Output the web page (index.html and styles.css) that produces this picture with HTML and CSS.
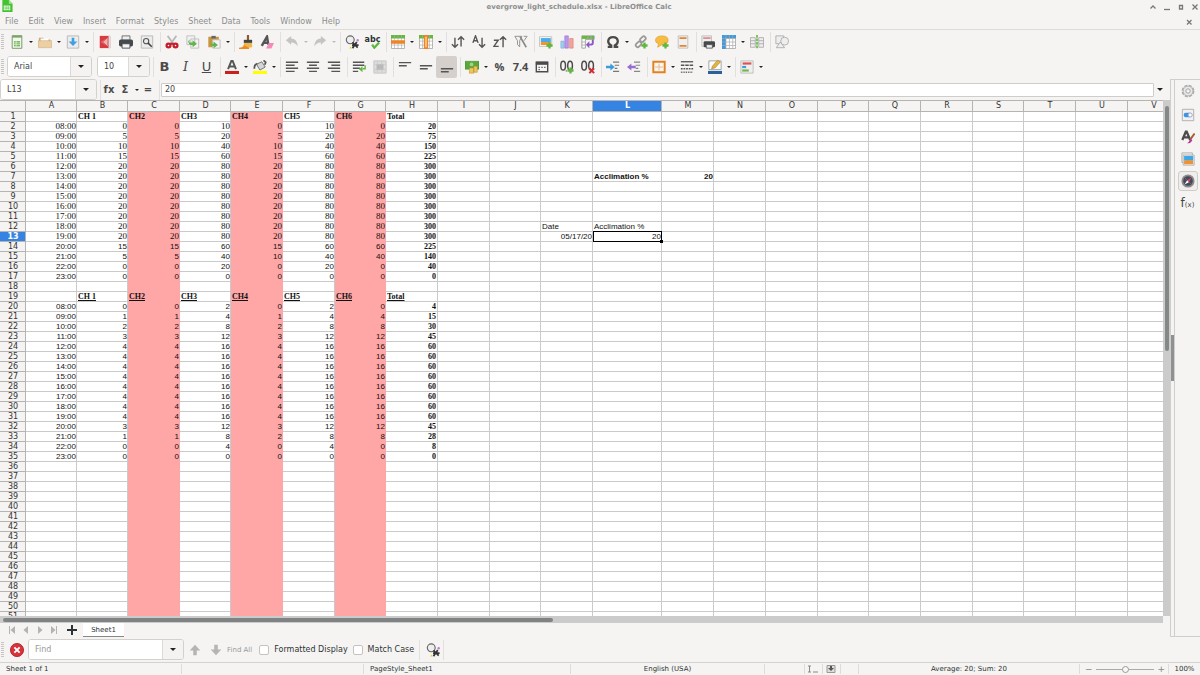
FILE: index.html
```html
<!DOCTYPE html>
<html lang="en">
<head>
<meta charset="utf-8">
<title>evergrow_light_schedule.xlsx - LibreOffice Calc</title>
<link rel="stylesheet" href="styles.css">
</head>
<body>
<header class="titlebar">
  <svg class="app-icon" viewBox="0 0 12 14"><path d="M1 0h7l4 4v9H1z" fill="#43c330"/><path d="M8 0l4 4H8z" fill="#9be58a"/><path d="M2.500 6h7v5h-7z" fill="#fff"/><path d="M2.500 7.700h7M2.500 9.400h7M5 6v5M7.300 6v5" stroke="#43c330" stroke-width=".6"/></svg>
  <h1 class="title">evergrow_light_schedule.xlsx - LibreOffice Calc</h1>
  <div class="window-controls">
    <button aria-label="Roll up"><svg viewBox="0 0 8 8"><path d="M1.500 5.500L4 3l2.500 2.500"/></svg></button>
    <button aria-label="Minimize"><svg viewBox="0 0 8 8"><path d="M1 6.500h6"/></svg></button>
    <button aria-label="Maximize"><svg viewBox="0 0 8 8"><path d="M2.500 2.500h3v3.500h-3z"/></svg></button>
    <button aria-label="Close"><svg viewBox="0 0 8 8"><path d="M1.500 1.500l5 5M6.500 1.500l-5 5"/></svg></button>
  </div>
</header>
<nav class="menubar">
  <button>File</button><button>Edit</button><button>View</button><button>Insert</button><button>Format</button><button>Styles</button><button>Sheet</button><button>Data</button><button>Tools</button><button>Window</button><button>Help</button>
  <button class="doc-close" aria-label="Close document"><svg viewBox="0 0 8 8"><path d="M2 2l4.500 4.500M6.500 2L2 6.500"/></svg></button>
</nav>

<div class="toolbar" role="toolbar" aria-label="Standard">
  <span class="grip"></span>
  <button class="tool" aria-label="New"><svg viewBox="0 0 16 16"><path d="M2.500.8h11v14.400h-11z" fill="#f3f8ee" stroke="#6b8f5a"/><path d="M4.500 7h7v6h-7z" fill="#6fb356"/><path d="M4.500 9h7M4.500 11h7M7 7v6" stroke="#fff" stroke-width=".7"/><path d="M2.500 1h11v2h-11z" fill="#7aa766"/></svg></button><button class="arrow" aria-label="New options"></button>
  <button class="tool" aria-label="Open"><svg viewBox="0 0 16 16"><path d="M1 13.500V3h5l1 2h7v8.500z" fill="#c9a97c"/><path d="M3 4h9v4H3z" fill="#fff"/><path d="M.5 6.500h15v8H.5z" fill="#ecd0a4" stroke="#caa676" stroke-width=".6"/></svg></button><button class="arrow" aria-label="Open options"></button>
  <button class="tool" aria-label="Save"><svg viewBox="0 0 16 16"><path d="M1.500 1h13v14h-13z" fill="#ececec" stroke="#b5b5b5"/><path d="M6.500 3h3v4.500H13L8 12.500 3 7.500h3.500z" fill="#3ea0e2"/></svg></button><button class="arrow" aria-label="Save options"></button>
  <i class="sep"></i>
  <button class="tool" aria-label="Export as PDF"><svg viewBox="0 0 16 16"><path d="M2 1h12v14H2z" fill="#d93a3f"/><path d="M12 1h2.500v14H12z" fill="#ddd"/><path d="M11 2.500v11L3.500 8z" fill="#f5b0ae"/><path d="M11 2.500L5 8l6 5.500" fill="none" stroke="#b3262c"/></svg></button>
  <button class="tool" aria-label="Print"><svg viewBox="0 0 16 16"><path d="M3.500 1h9v5h-9z" fill="#eee" stroke="#666"/><rect y="5" width="16" height="8" rx="2" fill="#444a4d"/><path d="M3.500 10h9v5h-9z" fill="#f5f5f5" stroke="#444"/></svg></button>
  <button class="tool" aria-label="Print preview"><svg viewBox="0 0 16 16"><path d="M1.500 1h13v14h-13z" fill="#ececec" stroke="#b5b5b5"/><circle cx="7" cy="7" r="3" fill="none" stroke="#555" stroke-width="1.300"/><path d="M9 9l4.500 4.500" stroke="#444" stroke-width="1.800"/></svg></button>
  <i class="sep"></i>
  <button class="tool" aria-label="Cut"><svg viewBox="0 0 16 16"><path d="M3 1l6.500 9M13 1L6.500 10" stroke="#b9b9b9" stroke-width="2"/><circle cx="4" cy="12" r="2.200" fill="#fff" stroke="#c41f2a" stroke-width="2.600"/><circle cx="12" cy="12" r="2.200" fill="#fff" stroke="#c41f2a" stroke-width="2.600"/><path d="M6 10h4" stroke="#c41f2a" stroke-width="2.400"/></svg></button>
  <button class="tool" aria-label="Copy"><svg viewBox="0 0 16 16"><path d="M1 1h9v10H1zM5.500 4.500h9v10.500h-9z" fill="#f2f2f2" stroke="#bbb"/><path d="M4 5v3.500h3.500V6l5 4-5 4v-2.500H6Q3 11 2.500 7z" fill="#61b34c"/></svg></button>
  <button class="tool" aria-label="Paste"><svg viewBox="0 0 16 16"><path d="M1.500 2h12v12h-12z" fill="#c9963e"/><path d="M5 1h5v3H5z" fill="#666"/><path d="M6.500 5.500H15V15H6.500z" fill="#f4f4f4" stroke="#bbb"/><path d="M4 7v3h3.500V7.500l5 4-5 3.500v-2.500Q3.500 12.500 3 8z" fill="#61b34c"/></svg></button><button class="arrow" aria-label="Paste options"></button>
  <i class="sep"></i>
  <button class="tool" aria-label="Clone formatting"><svg viewBox="0 0 16 16"><path d="M9 0h2.500v6H9z" fill="#8b5a2b"/><path d="M5.500 5.500H15V9H5.500z" fill="#444"/><path d="M5.500 9H15v5q-4 1-9.500 0z" fill="#f0b64c"/><path d="M0 14.500q5 0 5.500-3l6 3V16H0z" fill="#ef8a1d"/></svg></button>
  <button class="tool" aria-label="Clear formatting"><svg viewBox="0 0 16 16"><path d="M2 12.500L8 2l1.500 9M4 9h6" fill="none" stroke="#555" stroke-width="2.800"/><path d="M10 9h6l-3 6.500H7z" fill="#f58ab8"/></svg></button>
  <i class="sep"></i>
  <button class="tool" aria-label="Undo"><svg viewBox="0 0 16 16"><path d="M1 6l6-5v3q7 0 7.500 9Q12 8.500 7 8.500V11z" fill="#c4c4c4"/></svg></button><button class="arrow faded" aria-label="Undo list"></button>
  <button class="tool" aria-label="Redo"><svg viewBox="0 0 16 16"><path d="M15 6L9 1v3Q2 4 1.500 13 4 8.500 9 8.500V11z" fill="#c4c4c4"/></svg></button><button class="arrow faded" aria-label="Redo list"></button>
  <i class="sep"></i>
  <button class="tool" aria-label="Find and replace"><svg viewBox="0 0 16 16"><circle cx="6" cy="5.500" r="4.500" fill="#eee" stroke="#666" stroke-width="1.300"/><path d="M8.500 8.500l6 6M13.500 8l-5 7M8 11.500h7.500" stroke="#333" stroke-width="2"/><circle cx="14.500" cy="6" r="1.400" fill="#c47ad8"/><path d="M6 13l2 2.500H5z" fill="#edd400"/></svg></button>
  <button class="tool abc" aria-label="Spelling"><span>abc</span><svg viewBox="0 0 16 16"><path d="M7 11l2.500 3.500L15 8.500" fill="none" stroke="#5cb83c" stroke-width="2.600"/></svg></button>
  <i class="sep"></i>
  <button class="tool" aria-label="Row"><svg viewBox="0 0 16 16"><path d="M.5.5h15v15H.5z" fill="#fff" stroke="#aaa"/><path d="M0 0h16v4H0z" fill="#68b83e"/><path d="M0 11.500h16M4 0v16M8 0v16M12 0v16" stroke="#aaa" stroke-width=".7"/><path d="M0 6h16v4H0z" fill="#ee8425"/></svg></button><button class="arrow" aria-label="Row options"></button>
  <button class="tool" aria-label="Column"><svg viewBox="0 0 16 16"><path d="M.5.5h15v15H.5z" fill="#fff" stroke="#aaa"/><path d="M0 0h16v4H0z" fill="#68b83e"/><path d="M0 7h16M0 11.500h16M4 0v16M12 0v16" stroke="#aaa" stroke-width=".7"/><path d="M5.500 0h5v16h-5z" fill="#ee8425"/><path d="M7 2h2v12H7z" fill="#ffc88a"/></svg></button><button class="arrow" aria-label="Column options"></button>
  <i class="sep"></i>
  <button class="tool line" aria-label="Sort"><svg viewBox="0 0 16 16"><path d="M4.500 3v11M1 10.500L4.500 14 8 10.500M11.500 13V2M8 5.500L11.500 2 15 5.500"/></svg></button>
  <button class="tool line" aria-label="Sort ascending"><svg viewBox="0 0 16 16"><path d="M1 9l3-8 3 8M2.200 6.500h3.600M11.500 3v11M8 10.500l3.500 3.500 3.500-3.500"/></svg></button>
  <button class="tool line" aria-label="Sort descending"><svg viewBox="0 0 16 16"><path d="M1 6h5L1 13h5.500M11.500 14V2M8 5.500L11.500 2 15 5.500"/></svg></button>
  <button class="tool" aria-label="AutoFilter"><svg viewBox="0 0 16 16"><path d="M1 1.500h8l-2.500 5v7L4 11V6.500zM11 1.500h4l-3.500 5" fill="#f4f4f4" stroke="#888"/><path d="M7 2l7 12" stroke="#888" stroke-width="1.800"/></svg></button>
  <i class="sep"></i>
  <button class="tool" aria-label="Insert image"><svg viewBox="0 0 16 16"><path d="M.5 2h14v11H.5z" fill="#fff" stroke="#bbb"/><path d="M2 3.500h11.500V8H2z" fill="#49aee8"/><path d="M2 8h11.500v3.500H2z" fill="#ef9632"/><path d="M12 8.500v7M8.500 12h7" stroke="#62b53d" stroke-width="2.600"/></svg></button>
  <button class="tool" aria-label="Insert chart"><svg viewBox="0 0 16 16"><path d="M1 7h3.500v8H1z" fill="#a5cdf0" stroke="#73a9d8" stroke-width=".7"/><path d="M5.500 1h4v14h-4z" fill="#b99aea" stroke="#946bd0" stroke-width=".7"/><path d="M11 4h4v11h-4z" fill="#f3a59a" stroke="#df7a70" stroke-width=".7"/></svg></button>
  <button class="tool" aria-label="Insert pivot table"><svg viewBox="0 0 16 16"><path d="M1 1h14v4H5v10H1z" fill="#fff" stroke="#999"/><path d="M1 1h14v3.500H1z" fill="#68b83e"/><path d="M1 8h4M1 11.500h4M8 1v4M11.500 1v4" stroke="#aaa"/><path d="M13.500 5v4q0 2-3 2H8" fill="none" stroke="#8b5ac8" stroke-width="2.200"/><path d="M5.500 11l4-4v8z" fill="#8b5ac8"/></svg></button>
  <i class="sep"></i>
  <button class="tool" aria-label="Special character"><svg viewBox="0 0 16 16"><path d="M2 13.500h4V12Q2.500 10 2.500 7 3 2.500 8 2.500T13.500 7q0 3-3.500 5v1.500h4" fill="none" stroke="#4a4a4a" stroke-width="2.600"/></svg></button><button class="arrow" aria-label="Special character list"></button>
  <button class="tool" aria-label="Hyperlink"><svg viewBox="0 0 16 16"><g fill="none" stroke="#999" stroke-width="2"><rect x="8" y="1" width="4.500" height="7" rx="2" transform="rotate(45 10 4.500)"/><rect x="3" y="7" width="4.500" height="7" rx="2" transform="rotate(45 5 10.500)"/></g><path d="M12 8.500v7M8.500 12h7" stroke="#62b53d" stroke-width="2.600"/></svg></button>
  <button class="tool" aria-label="Comment"><svg viewBox="0 0 16 16"><path d="M8 1q7 0 7 5t-7 5l-5 3 1-4Q.5 9 .5 6 1 1 8 1z" fill="#f7bd43" stroke="#dc9b21" stroke-width=".7"/><path d="M12 8.500v7M8.500 12h7" stroke="#62b53d" stroke-width="2.600"/></svg></button>
  <button class="tool" aria-label="Headers and footers"><svg viewBox="0 0 16 16"><path d="M2.500 1h11v14h-11z" fill="#f0f0f0" stroke="#bbb"/><path d="M4 3.500h8M4 12.500h8" stroke="#e9842c" stroke-width="2"/></svg></button>
  <i class="sep"></i>
  <button class="tool" aria-label="Define print area"><svg viewBox="0 0 16 16"><path d="M1 1h11v12H1z" fill="#eee" stroke="#bbb"/><path d="M2.500 3.500H11" stroke="#d85555" stroke-width="1.300"/><rect x="3" y="7" width="13" height="7" rx="1.500" fill="#44494c"/><path d="M6 11h7v4H6z" fill="#eee" stroke="#555"/></svg></button>
  <button class="tool" aria-label="Freeze rows and columns"><svg viewBox="0 0 16 16"><path d="M.5.500h15v15H.5z" fill="#fff" stroke="#aaa"/><path d="M0 0h16v4H4.500v12H0z" fill="#3f9ade"/><path d="M0 4h16M0 8h16M0 12h16M4.500 0v16M8.500 0v16M12.300 0v16" stroke="#aaa" stroke-width=".8"/></svg></button><button class="arrow" aria-label="Freeze options"></button>
  <button class="tool" aria-label="Split window"><svg viewBox="0 0 16 16"><path d="M.5 3h5.500v11H.5zM10 3h5.500v11H10z" fill="#eee" stroke="#aaa"/><path d="M.5 6.500H6M.5 10H6M10 6.500h5.500M10 10h5.500" stroke="#aaa"/><path d="M8 0v16" stroke="#62b53d" stroke-width="1.800" stroke-dasharray="3 1"/></svg></button>
  <i class="sep"></i>
  <button class="tool" aria-label="Show draw functions"><svg viewBox="0 0 16 16"><g fill="#eee" stroke="#aaa"><path d="M1 1h9v9H1z"/><circle cx="11" cy="7" r="4.500"/><path d="M6 8l5 6.500H1.500z"/></g></svg></button>
</div>

<div class="toolbar" role="toolbar" aria-label="Formatting">
  <span class="grip"></span>
  <div class="combo font-name"><input aria-label="Font name" value="Arial"><button aria-label="Font list"></button></div>
  <div class="combo font-size"><input aria-label="Font size" value="10"><button aria-label="Size list"></button></div>
  <i class="sep"></i>
  <button class="tool glyph"><b>B</b></button>
  <button class="tool glyph serif"><em>I</em></button>
  <button class="tool glyph"><u>U</u></button>
  <i class="sep"></i>
  <button class="tool" aria-label="Font color"><svg viewBox="0 0 16 16"><path d="M3.500 10.500L7.300 1h1.400l3.800 9.500M5 7.500h6" fill="none" stroke="#555" stroke-width="2.200"/><path d="M0 12.500h16v3.500H0z" fill="#c9211e"/></svg></button><button class="arrow" aria-label="Font colors"></button>
  <button class="tool" aria-label="Highlighting color"><svg viewBox="0 0 16 16"><path d="M4 5l6-3 4 6-6 3.500z" fill="#d5d5d5" stroke="#666"/><path d="M1.500 10Q1.500 5 5 4M12 .5l2.500 2-1 3" fill="none" stroke="#555" stroke-width="2"/><path d="M0 12.500h16v3.500H0z" fill="#ff0"/></svg></button><button class="arrow" aria-label="Highlighting colors"></button>
  <i class="sep"></i>
  <button class="tool line" aria-label="Align left"><svg viewBox="0 0 16 16"><path d="M1 2.500h14M1 6h10M1 9.500h14M1 13h10"/></svg></button>
  <button class="tool line" aria-label="Center"><svg viewBox="0 0 16 16"><path d="M1 2.500h14M3.500 6h9M1 9.500h14M3.500 13h9"/></svg></button>
  <button class="tool line" aria-label="Align right"><svg viewBox="0 0 16 16"><path d="M1 2.500h14M5 6h10M1 9.500h14M5 13h10"/></svg></button>
  <i class="sep"></i>
  <button class="tool line" aria-label="Wrap text"><svg viewBox="0 0 16 16"><path d="M1 2.500h13M1 6h13M1 9.500h8M1 13h6"/><path d="M15 6v4h-3" style="stroke:#62b53d"/><path d="M8 10.500l4-3.500v7z" fill="#62b53d" style="stroke:none"/></svg></button>
  <button class="tool" aria-label="Merge cells"><svg viewBox="0 0 16 16"><path d="M1 1h14v14H1z" fill="#ddd" stroke="#c4c4c4"/><path d="M1 5h14M1 11h14M5 1v4M10 1v4M5 11v4M10 11v4" stroke="#ccc"/><path d="M4 5h8v6H4z" fill="#b9b9b9"/></svg></button>
  <i class="sep"></i>
  <button class="tool line" aria-label="Align top"><svg viewBox="0 0 16 16"><path d="M1 3h14M1 6.500h9"/></svg></button>
  <button class="tool line" aria-label="Center vertically"><svg viewBox="0 0 16 16"><path d="M1 6.500h14M1 10h9"/></svg></button>
  <button class="tool line active" aria-label="Align bottom"><svg viewBox="0 0 16 16"><path d="M1 10h14M1 13.500h9"/></svg></button>
  <i class="sep"></i>
  <button class="tool" aria-label="Currency"><svg viewBox="0 0 16 16"><path d="M0 1.500h16v9H0z" fill="#58a83a" stroke="#3f8527" stroke-width=".6"/><circle cx="7.500" cy="5" r="2.200" fill="#9fd485"/><path d="M5 9h5v6H5zM10 7h4v7h-4z" fill="#edc660" stroke="#b88c25" stroke-width=".6"/></svg></button><button class="arrow" aria-label="Currency list"></button>
  <button class="tool glyph small"><b>%</b></button>
  <button class="tool glyph small"><b>7.4</b></button>
  <button class="tool" aria-label="Date"><svg viewBox="0 0 16 16"><path d="M1.500 2.500h13v11h-13z" fill="#f5f5f5" stroke="#4b4b4b" stroke-width="1.600"/><path d="M1 2h14v3.500H1z" fill="#4b4b4b"/><path d="M4 8.500h1.500M7.300 8.500h1.500M10.500 8.500H12M4 11h1.500" stroke="#555" stroke-width="1.500"/></svg></button>
  <i class="sep"></i>
  <button class="tool" aria-label="Add decimal place"><svg viewBox="0 0 16 16"><g fill="none" stroke="#4b4b4b" stroke-width="1.700"><ellipse cx="3.600" cy="6.500" rx="2.700" ry="5"/><ellipse cx="11.500" cy="6.500" rx="2.700" ry="5"/></g><path d="M6.500 12.500h1.500" stroke="#444"/><path d="M12 8.500v7M8.500 12h7" stroke="#62b53d" stroke-width="2.600"/></svg></button>
  <button class="tool" aria-label="Delete decimal place"><svg viewBox="0 0 16 16"><g fill="none" stroke="#4b4b4b" stroke-width="1.700"><ellipse cx="3.600" cy="6.500" rx="2.700" ry="5"/><ellipse cx="11.500" cy="6.500" rx="2.700" ry="5"/></g><path d="M9.500 9.500l5.500 5.500M15 9.500L9.500 15" stroke="#cf2f35" stroke-width="2.300"/></svg></button>
  <i class="sep"></i>
  <button class="tool" aria-label="Increase indent"><svg viewBox="0 0 16 16"><path d="M8 2.500h7M10 6h5M10 9.500h3M8 13h7" stroke="#777" stroke-width="1.300"/><path d="M0 6.500h5V4l5 4-5 4V9.500H0z" fill="#3b9bdc"/></svg></button>
  <button class="tool" aria-label="Decrease indent"><svg viewBox="0 0 16 16"><path d="M8 2.500h7M10 6h5M10 9.500h3M8 13h7" stroke="#888" stroke-width="1.300"/><path d="M10 6.500H5V4L0 8l5 4V9.500h5z" fill="#9a6bd2"/></svg></button>
  <i class="sep"></i>
  <button class="tool" aria-label="Borders"><svg viewBox="0 0 16 16"><path d="M1.500 2h13v12h-13z" fill="#f8f5f0" stroke="#e3811f" stroke-width="2.200"/><path d="M8 4v8M3.500 8h9" stroke="#ddb78c"/></svg></button><button class="arrow" aria-label="Border list"></button>
  <button class="tool" aria-label="Border style"><svg viewBox="0 0 16 16"><path d="M1 2h14" stroke="#555" stroke-width="1.500"/><path d="M1 6h14" stroke="#555" stroke-width="1.500" stroke-dasharray="4 1"/><path d="M1 10h14" stroke="#555" stroke-width="1.500" stroke-dasharray="2 1"/><path d="M1 14h14" stroke="#555" stroke-width="1.500" stroke-dasharray="1 1"/></svg></button><button class="arrow" aria-label="Border styles"></button>
  <button class="tool" aria-label="Border color"><svg viewBox="0 0 16 16"><path d="M1 1h14v10H1z" fill="#fff" stroke="#999"/><path d="M4 10l1-3 6-7 3 2.500L8 9z" fill="#e7b341" stroke="#99752b" stroke-width=".6"/><path d="M0 12.500h16v3.500H0z" fill="#2a6099"/></svg></button><button class="arrow" aria-label="Border colors"></button>
  <i class="sep"></i>
  <button class="tool" aria-label="Conditional formatting"><svg viewBox="0 0 16 16"><path d="M1 1h14v14H1z" fill="#eee" stroke="#bbb"/><path d="M3 4h10" stroke="#e05252" stroke-width="2.500"/><path d="M2.500 8H7" stroke="#3f9ade" stroke-width="2.500"/><path d="M2.500 12H10" stroke="#70ba49" stroke-width="2.500"/></svg></button><button class="arrow" aria-label="Conditional formats"></button>
</div>

<div class="workspace">
  <main class="document">
    <div class="formula-bar">
      <div class="combo name-box"><input aria-label="Name box" value="L13"><button aria-label="Cell ranges"></button></div>
      <i class="sep"></i>
      <button class="fx">fx</button>
      <button class="fx">Σ</button><button class="arrow" aria-label="Functions"></button>
      <button class="fx">=</button>
      <i class="sep"></i>
      <input class="formula" aria-label="Input line" value="20">
      <button class="arrow big" aria-label="Expand formula bar"></button>
    </div>
    <div class="sheet-area">
      <div class="sheet"><table class="grid" id="grid"></table></div>
      <div class="vscroll"><span class="vthumb"></span></div>
    </div>
    <div class="hscroll"><span class="hthumb"></span></div>
    <div class="tabs">
      <button class="nav" aria-label="First sheet"><svg viewBox="0 0 8 8"><path d="M7 0v8L2.500 4zM1 0h1v8H1z"/></svg></button>
      <button class="nav" aria-label="Previous sheet"><svg viewBox="0 0 8 8"><path d="M6 0v8L1.500 4z"/></svg></button>
      <button class="nav" aria-label="Next sheet"><svg viewBox="0 0 8 8"><path d="M2 0v8l4.500-4z"/></svg></button>
      <button class="nav" aria-label="Last sheet"><svg viewBox="0 0 8 8"><path d="M1 0v8l4.500-4zM6 0h1v8H6z"/></svg></button>
      <button class="add" aria-label="Add sheet"><svg viewBox="0 0 10 10"><path d="M4 0h2v4h4v2H6v4H4V6H0V4h4z"/></svg></button>
      <button class="tab">Sheet1</button>
    </div>
  </main>
  <div class="splitter"><span></span></div>
  <aside class="sidebar">
    <button aria-label="Sidebar settings"><svg viewBox="0 0 16 16"><circle cx="8" cy="8" r="6.300" fill="#e2e2e2" stroke="#aaa" stroke-width="2" stroke-dasharray="3.500 1.450"/><circle cx="8" cy="8" r="5.500" fill="#e8e8e8" stroke="#aaa" stroke-width=".8"/><circle cx="8" cy="8" r="2.500" fill="#f5f4f2" stroke="#999"/></svg></button>
    <button aria-label="Properties"><svg viewBox="0 0 16 16"><path d="M1.500 1.500h13v13h-13z" fill="#f1f1f1" stroke="#aaa"/><rect x="3" y="5.500" width="10" height="5" rx="2.500" fill="#3c94e4"/><circle cx="10.500" cy="8" r="2.300" fill="#fff" stroke="#aac"/></svg></button>
    <button aria-label="Styles"><svg viewBox="0 0 16 16"><path d="M1.500 11.500L5.500 2h1l4 9.500M3 8.500h6" fill="none" stroke="#4b4b4b" stroke-width="2.600"/><path d="M15.500 4l-5 7" stroke="#a6602b" stroke-width="2.200"/><path d="M11 10l2 2q-2 3.500-6 3 2-1 4-5z" fill="#b9329f"/></svg></button>
    <button aria-label="Gallery"><svg viewBox="0 0 16 16"><path d="M1 1h12v11H1z" fill="#eee" stroke="#aaa"/><path d="M2.500 3.500H15V15H2.500z" fill="#fff" stroke="#aaa"/><path d="M3.500 4.500h10.500V10H3.500z" fill="#3fa7e6"/><path d="M3.500 10l4-1 6.500 1v4H3.500z" fill="#ef9235"/></svg></button>
    <button class="current" aria-label="Navigator"><svg viewBox="0 0 16 16"><circle cx="8" cy="8" r="6.500" fill="#3e4c60" stroke="#8c8c8c" stroke-width="2"/><path d="M12 4L9 9.500 7 7z" fill="#e5454c"/><path d="M4 12l3-5 2 2.500z" fill="#fff"/><path d="M4 4l3 3M9 9l3 3" stroke="#b34a50"/></svg></button>
    <button class="fn" aria-label="Functions">f<small>(x)</small></button>
  </aside>
</div>

<div class="findbar" role="search">
  <span class="grip"></span>
  <button class="find-close" aria-label="Close find bar"><svg viewBox="0 0 16 16"><circle cx="8" cy="8" r="7.500" fill="#d9323a" stroke="#ad2229"/><path d="M5 5l6 6M11 5l-6 6" stroke="#fff" stroke-width="2.200"/></svg></button>
  <div class="combo find-input"><input aria-label="Find" placeholder="Find"><button aria-label="Search history"></button></div>
  <button class="tool" aria-label="Find previous"><svg viewBox="0 0 16 16"><path d="M8 2l6 6.500h-4V14H6V8.500H2z" fill="#b4b4b4"/></svg></button>
  <button class="tool" aria-label="Find next"><svg viewBox="0 0 16 16"><path d="M8 14l6-6.500h-4V2H6v5.500H2z" fill="#b4b4b4"/></svg></button>
  <button class="find-all">Find All</button>
  <label class="check"><input type="checkbox">Formatted Display</label>
  <label class="check"><input type="checkbox">Match Case</label>
  <i class="sep"></i>
  <button class="tool" aria-label="Find and replace dialog"><svg viewBox="0 0 16 16"><circle cx="6" cy="5.500" r="4.500" fill="#eee" stroke="#666" stroke-width="1.300"/><path d="M8.500 8.500l6 6M13.500 8l-5 7M8 11.500h7.500" stroke="#333" stroke-width="2"/><circle cx="14.500" cy="6" r="1.400" fill="#c47ad8"/><path d="M6 13l2 2.500H5z" fill="#edd400"/></svg></button>
  <i class="sep"></i>
</div>

<footer class="statusbar">
  <span>Sheet 1 of 1</span>
  <span></span>
  <span>PageStyle_Sheet1</span>
  <span class="mid">English (USA)</span>
  <span class="plain"></span>
  <span class="icon"><svg viewBox="0 0 12 8"><path d="M1 1h3M2.500 1v6M1 7h3M6 7h5" fill="none" stroke="#888"/></svg></span>
  <span class="icon"><svg viewBox="0 0 12 8"><path d="M2 .5h8v7H2z" fill="#ddd" stroke="#999"/><path d="M5 1h2v2h2L6 6 3 3h2z" fill="#555"/></svg></span>
  <span class="icon"></span>
  <span class="mid">Average: 20; Sum: 20</span>
  <span class="zoom"><button aria-label="Zoom out">−</button><input type="range" min="0" max="100" value="50" aria-label="Zoom"><button aria-label="Zoom in">+</button></span>
  <span class="percent">100%</span>
</footer>
<script src="grid.js"></script>
</body>
</html>
```

FILE: styles.css
```css
* { box-sizing: border-box; }
body {
  margin: 0;
  height: 100vh;
  display: flex;
  flex-direction: column;
  overflow: hidden;
  background: #f5f4f2;
  color: #2e3436;
  font: 8px/10px "DejaVu Sans", sans-serif;
}
button {
  margin: 0;
  padding: 0;
  border: 0;
  background: none;
  color: inherit;
  font: inherit;
}
input { font: inherit; color: #444; }
svg { display: block; }

.titlebar {
  flex: none;
  display: grid;
  grid-template-columns: 1fr auto 1fr;
  align-items: center;
  height: 13px;
  padding: 0 1px;
}
.app-icon { width: 12px; height: 13px; }
.title { margin: 0 42px 0 0; font-size: 7px; line-height: 12px; font-weight: bold; color: #8d8f8f; }
.window-controls { display: flex; justify-content: flex-end; gap: 6px; }
.window-controls svg, .doc-close svg {
  width: 8px;
  height: 8px;
  fill: none;
  stroke: #777;
  stroke-width: 1.3;
}
.menubar {
  flex: none;
  display: flex;
  align-items: center;
  gap: 10px;
  height: 17px;
  padding: 0 7px 0 5px;
  border-bottom: 1px solid #dddcda;
  color: #8b8e8f;
}
.menubar button { padding-top: 2px; }
.doc-close { margin-left: auto; }

.toolbar { flex: none; display: flex; align-items: center; height: 24px; }
.toolbar + .toolbar { height: 25px; }
.grip {
  flex: none;
  width: 3px;
  height: 16px;
  margin: 0 2px 0 1px;
  background: repeating-linear-gradient(#c6c5c3 0 1px, transparent 1px 2px);
}
.tool {
  flex: none;
  width: 21px;
  height: 22px;
  display: grid;
  place-items: center;
}
.tool svg { width: 14px; height: 14px; }
.tool.line svg { fill: none; stroke: #555; stroke-width: 1.6; }
.tool.active { border-radius: 2px; background: #d5d0cc; }
.tool.glyph { font-size: 13px; line-height: 16px; color: #4b4b4b; }
.tool.small { font-family: "Open Sans", sans-serif; font-size: 11px; }
.tool.serif { font-family: "DejaVu Serif", serif; }
.abc span { grid-area: 1 / 1; font-size: 8px; line-height: 8px; font-weight: bold; padding-bottom: 5px; }
.abc svg { grid-area: 1 / 1; }
.arrow { flex: none; width: 7px; height: 16px; display: grid; place-items: center; }
.arrow::before, .combo button::before {
  content: "";
  border: 2px solid transparent;
  border-top-color: #222;
  border-bottom: 0;
}
.arrow.faded::before { border-top-color: #bbb; }
.combo button::before, .arrow.big::before { border-width: 3px 3px 0; }
.sep { flex: none; width: 4px; height: 20px; border-right: 1px solid #e2e0de; }

.combo {
  flex: none;
  display: flex;
  height: 21px;
  border: 1px solid #d4d0cc;
  border-radius: 3px;
  overflow: hidden;
  background: #fff;
}
.combo input { flex: 1; min-width: 0; border: 0; padding: 0 6px; background: #fff; }
.combo input::placeholder { color: #999; opacity: 1; }
.combo button {
  flex: none;
  width: 21px;
  display: grid;
  place-items: center;
  border-left: 1px solid #dcd9d6;
  background: #f4f3f1;
}
.font-name { width: 85px; margin: 0 5px 0 1px; }
.font-size { width: 53px; }
.name-box { width: 97px; }

.workspace { flex: 1; min-height: 0; display: flex; }
.document { flex: 1; min-width: 0; display: flex; flex-direction: column; }
.formula-bar { flex: none; display: flex; align-items: center; height: 21px; }
.fx { flex: none; width: 16px; font-size: 10px; font-weight: bold; color: #4b4b4b; }
.formula {
  flex: 1;
  min-width: 0;
  height: 14px;
  margin-left: 1px;
  padding: 0 3px;
  border: 1px solid #cfcdca;
  border-radius: 1px;
  background: #fff;
}
.arrow.big { width: 12px; margin-right: 4px; }

.sheet-area { flex: 1; min-height: 0; display: flex; }
.sheet { flex: 1; min-width: 0; overflow: hidden; background: #fff; }
.grid { table-layout: fixed; border-collapse: separate; border-spacing: 0; color: #111; }
.grid th, .grid td {
  height: 10px;
  padding: 0 0 0 1px;
  border: solid #cacaca;
  border-width: 0 1px 1px 0;
  line-height: 9px;
  white-space: nowrap;
  font-weight: normal;
}
.grid th { background: #f5f4f2; border-color: #b4b4b4; color: #333; text-align: center; }
.grid thead th { height: 12px; border-top-width: 1px; line-height: 10px; }
.grid th.selected { background: #3584e4; color: #fff; font-weight: bold; }
.grid td { font-family: "Liberation Sans", Arial, sans-serif; font-size: 8px; }
.grid td.serif { font-family: "Liberation Serif", "Times New Roman", serif; font-size: 9px; }
.grid td.head, .grid td.total { font-family: "Liberation Serif", "Times New Roman", serif; font-weight: bold; }
.grid td.under { text-decoration: underline; }
.grid td.bold { font-weight: bold; }
.grid td.num { text-align: right; }
.grid td.total { padding-right: 1px; }
.grid td.pink { background: #ffa6a6; border-color: #ffa6a6; }
.grid td.cursor { position: relative; }
.cursor::before { content: ""; position: absolute; inset: -1px -1px -1px 0; border: 1px solid #000; }
.cursor::after { content: ""; position: absolute; right: -2px; bottom: -2px; width: 3px; height: 3px; background: #000; }

.vscroll { flex: none; width: 7px; padding: 6px 1px 0 2px; background: #cbcbcb; }
.vthumb { display: block; height: 48%; border-radius: 2px; background: #858888; }
.hscroll { flex: none; height: 7px; margin-right: 7px; padding: 2px 3px; background: #cbcbcb; }
.hthumb { display: block; width: 47.5%; height: 4px; border-radius: 2px; background: #808383; }
.tabs { flex: none; display: flex; align-items: center; height: 14px; padding-left: 5px; }
.nav { width: 14px; display: grid; place-items: center; }
.nav svg { width: 8px; height: 8px; fill: #b3b3b3; }
.add { width: 22px; display: grid; place-items: center; }
.add svg { width: 10px; height: 10px; fill: #2e3436; }
.tab { width: 41px; height: 14px; background: #fff; border-bottom: 1px solid #888; font-size: 7px; }

.splitter {
  flex: none;
  width: 5px;
  display: grid;
  align-items: center;
  border: 1px solid #cfcecc;
}
.splitter span { height: 46px; background: #8e9192; }
.sidebar {
  flex: none;
  width: 25px;
  display: flex;
  flex-direction: column;
  align-items: center;
  gap: 2px;
  padding-top: 1px;
  border: solid #cfcecc;
  border-width: 1px 0;
}
.sidebar button {
  width: 20px;
  height: 20px;
  display: grid;
  place-items: center;
  border: 1px solid transparent;
  border-radius: 3px;
}
.sidebar button:first-child { margin-bottom: 2px; }
.sidebar svg { width: 14px; height: 14px; }
.sidebar .current { border-color: #cfccc9; background: #f0eeec; }
.sidebar .fn { display: block; font-size: 12px; line-height: 18px; color: #444; }
.fn small { font-size: 7px; }

.findbar { flex: none; display: flex; align-items: center; height: 25px; }
.find-close { margin-left: 4px; width: 14px; }
.find-close svg { width: 14px; height: 14px; }
.find-input { width: 156px; margin: 0 0 0 4px; }
.find-all { margin: 0 7px 0 1px; font-size: 7px; color: #999; }
.check { display: flex; align-items: center; gap: 5px; margin-right: 5px; }
.check input {
  appearance: none;
  width: 10px;
  height: 10px;
  margin: 0;
  border: 1px solid #c5c2bf;
  border-radius: 2px;
  background: #fff;
}
.findbar .sep { margin-right: 2px; width: 1px; }

.statusbar {
  flex: none;
  display: grid;
  grid-template-columns:
    minmax(0, 182fr) minmax(0, 182fr) minmax(0, 207fr) minmax(0, 194fr) minmax(0, 40fr)
    minmax(0, 18fr) minmax(0, 18fr) minmax(0, 18fr) minmax(0, 221fr) minmax(0, 89fr) minmax(0, 31fr);
  align-items: center;
  height: 13px;
  border-top: 1px solid #d3d2d0;
  font-size: 7px;
}
.statusbar > span { height: 10px; padding-left: 6px; border-right: 1px solid #dddcda; white-space: nowrap; }
.statusbar > .mid { padding: 0; text-align: center; }
.statusbar > .icon { padding: 1px 2px; }
.icon svg { width: 12px; height: 8px; }
.statusbar > .zoom { display: flex; align-items: center; gap: 3px; padding: 0 3px 0 5px; }
.statusbar > .percent { padding: 0; border: 0; text-align: center; }
.zoom button { font-size: 9px; color: #888; }
.zoom input { flex: 1; min-width: 0; height: 8px; margin: 0; appearance: none; background: linear-gradient(#aaa, #aaa) center / 100% 1px no-repeat; }
.zoom input::-webkit-slider-thumb { appearance: none; width: 7px; height: 7px; border: 1px solid #999; border-radius: 50%; background: #f8f8f8; }
```

FILE: grid.js
```js
const widths = [26, 51, 51, 52, 51, 52, 52, 51, 52, 52, 51, 52, 69, 52, 52, 52, 51, 52, 52, 51, 52, 52, 52];
const letters = "ABCDEFGHIJKLMNOPQRSTUV".split("");
const heads = ["CH 1", "CH2", "CH3", "CH4", "CH5", "CH6", "Total"];

// Each row: channels 1-6, then the total.
const full = [
  [0, 0, 10, 0, 10, 0, 20],
  [5, 5, 20, 5, 20, 20, 75],
  [10, 10, 40, 10, 40, 40, 150],
  [15, 15, 60, 15, 60, 60, 225],
  ...Array(8).fill([20, 20, 80, 20, 80, 80, 300]),
  [15, 15, 60, 15, 60, 60, 225],
  [5, 5, 40, 10, 40, 40, 140],
  [0, 0, 20, 0, 20, 0, 40],
  [0, 0, 0, 0, 0, 0, 0],
];
const scaled = [
  [0, 0, 2, 0, 2, 0, 4],
  [1, 1, 4, 1, 4, 4, 15],
  [2, 2, 8, 2, 8, 8, 30],
  [3, 3, 12, 3, 12, 12, 45],
  ...Array(8).fill([4, 4, 16, 4, 16, 16, 60]),
  [3, 3, 12, 3, 12, 12, 45],
  [1, 1, 8, 2, 8, 8, 28],
  [0, 0, 4, 0, 4, 0, 8],
  [0, 0, 0, 0, 0, 0, 0],
];

const cells = {};
const put = (ref, text, cls = "") => { cells[ref] = { text, cls }; };

function block(top, rows, headClass, serifUntil) {
  heads.forEach((h, i) => put(letters[i + 1] + top, h, headClass));
  rows.forEach((row, r) => {
    const n = top + 1 + r;
    const cls = n <= serifUntil ? "num serif" : "num";
    put("A" + n, String(8 + r).padStart(2, "0") + ":00", cls);
    row.forEach((v, i) => put(letters[i + 1] + n, v, i === 6 ? "num total" : cls));
  });
}
block(1, full, "head", 13);
block(19, scaled, "head under", 0);
put("L7", "Acclimation %", "bold");
put("M7", 20, "num bold");
put("K12", "Date");
put("L12", "Acclimation %");
put("K13", "05/17/20", "num");
put("L13", 20, "num cursor");

const grid = document.getElementById("grid");
grid.style.width = widths.reduce((a, b) => a + b) + "px";

let html = "<colgroup>" + widths.map(w => `<col style="width:${w}px">`).join("") + "</colgroup>";
html += "<thead><tr><th></th>" + letters.map(l => `<th scope="col"${l === "L" ? ' class="selected"' : ""}>${l}</th>`).join("") + "</tr></thead><tbody>";
for (let n = 1; n <= 51; n++) {
  html += `<tr><th scope="row"${n === 13 ? ' class="selected"' : ""}>${n}</th>`;
  for (const l of letters) {
    const c = cells[l + n] || { text: "", cls: "" };
    const cls = (c.cls + ("CEG".includes(l) ? " pink" : "")).trim();
    html += `<td${cls ? ` class="${cls}"` : ""}>${c.text}</td>`;
  }
  html += "</tr>";
}
grid.innerHTML = html + "</tbody>";
```
